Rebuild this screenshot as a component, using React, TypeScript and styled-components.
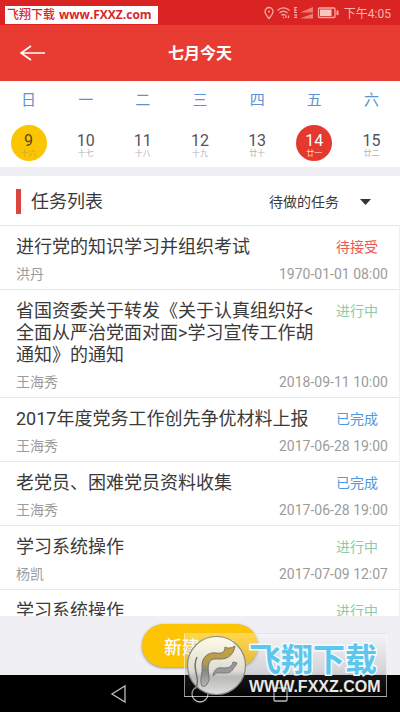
import React, { useState } from "react";
import styled, { createGlobalStyle, css } from "styled-components";

const GlobalStyle = createGlobalStyle`
  * { box-sizing: border-box; }
  body {
    margin: 0;
    background: #efeff4;
    color: #3a3a3a;
    font-family: Roboto, "Noto Sans CJK SC", sans-serif;
  }
  button, select { font: inherit; color: inherit; background: none; border: 0; padding: 0; margin: 0; cursor: pointer; }
  h1, h2, h3, p { margin: 0; font-weight: 400; }
`;

const Page = styled.div`
  position: relative;
  display: flex;
  flex-direction: column;
  height: 100vh;
  overflow: hidden;
`;

const StatusBar = styled.div`
  display: flex;
  align-items: center;
  justify-content: flex-end;
  gap: 5px;
  height: 25px;
  padding: 0 9px;
  flex: none;
  background: #d92423;
  color: #f8b4ae;
  font-size: 12px;
`;

const Header = styled.header`
  display: grid;
  grid-template-columns: 48px 1fr 48px;
  align-items: center;
  height: 56px;
  padding: 0 9px;
  flex: none;
  background: #e83c32;
  color: #fff;
`;

const BackButton = styled.button`
  display: flex;
  align-items: center;
  justify-content: center;
  height: 48px;
`;

const HeaderTitle = styled.h1`
  padding-top: 2px;
  text-align: center;
  font-size: 16px;
  font-weight: 700;
  line-height: 24px;
`;

const Calendar = styled.section`
  display: grid;
  grid-template-columns: repeat(7, 1fr);
  justify-items: center;
  row-gap: 13px;
  padding: 8px 0 6px;
  flex: none;
  background: #fff;
`;

const Weekday = styled.div`
  color: #5c93d2;
  font-size: 15px;
  line-height: 23px;
`;

type Mark = "today" | "selected" | undefined;

const Day = styled.button<{ $mark: Mark }>`
  display: flex;
  flex-direction: column;
  align-items: center;
  justify-content: center;
  width: 36px;
  height: 36px;
  padding-top: 3px;
  border-radius: 50%;
  color: #55515c;
  ${(p) => p.$mark === "today" && css`background: #fbc600; color: #554a20;`}
  ${(p) => p.$mark === "selected" && css`background: #e5382f; color: #fff;`}
`;

const DayNumber = styled.span`
  font-size: 16px;
  line-height: 18px;
`;

const Lunar = styled.span<{ $mark: Mark }>`
  font-size: 8px;
  line-height: 8px;
  color: ${(p) => (p.$mark === "selected" ? "#fbd5d2" : p.$mark === "today" ? "#d0a92a" : "#b4b4b8")};
`;

const ListHeader = styled.div`
  display: flex;
  align-items: center;
  height: 49px;
  margin-top: 9px;
  padding: 2px 29px 0 16px;
  flex: none;
  background: #fff;
`;

const Accent = styled.span`
  width: 5px;
  height: 25px;
  margin-right: 10px;
  background: #dc453f;
`;

const ListTitle = styled.h2`
  flex: 1;
  font-size: 18px;
  line-height: 26px;
`;

const Filter = styled.label`
  display: flex;
  align-items: center;
  gap: 21px;
`;

const FilterSelect = styled.select`
  appearance: none;
  outline: none;
  font-size: 14px;
  line-height: 22px;
`;

const TaskList = styled.ul`
  flex: 1;
  min-height: 0;
  margin: 0;
  padding: 0;
  list-style: none;
  overflow-y: auto;
  scrollbar-width: none;
  background: #fff;
  border-right: 1px solid #f0f0f0;
`;

const TaskRow = styled.li`
  display: grid;
  grid-template-columns: 1fr 52px;
  row-gap: 6px;
  padding: 10px 11px 5px 16px;
  border-top: 1px solid #e6e6e6;
`;

const TaskTitle = styled.h3`
  padding-right: 12px;
  font-size: 18px;
  line-height: 22px;
`;

const stateColors = { 待接受: "#ee5850", 进行中: "#8accaa", 已完成: "#4f98e2" };
type State = keyof typeof stateColors;

const TaskState = styled.span<{ $state: State }>`
  font-size: 14px;
  line-height: 22px;
  color: ${(p) => stateColors[p.$state]};
`;

const TaskMeta = styled.div`
  grid-column: 1 / -1;
  display: flex;
  justify-content: space-between;
  font-size: 14px;
  line-height: 20px;
  color: #9c9c9c;
`;

const Footer = styled.footer`
  display: flex;
  justify-content: center;
  padding: 8px 0;
  flex: none;
  background: #efeff4;
`;

const CreateButton = styled.button`
  height: 43px;
  padding: 0 22px;
  border-radius: 22px;
  background: #fdc403;
  color: #fff;
  font-size: 18px;
  font-weight: 500;
  box-shadow: 0 1px 3px rgba(0, 0, 0, 0.4);
`;

const NavBar = styled.nav`
  display: flex;
  align-items: center;
  justify-content: center;
  gap: 57px;
  height: 37px;
  flex: none;
  background: #000;
`;

const NavButton = styled.button`
  display: flex;
  width: 24px;
  height: 24px;
`;

const SiteTag = styled.div`
  position: absolute;
  top: 6px;
  left: 5px;
  display: flex;
  align-items: center;
  gap: 4px;
  height: 18px;
  padding: 0 6px 0 2px;
  background: #fff;
  color: #d8262a;
  font-family: "Open Sans", "Noto Sans CJK SC", sans-serif;
  font-size: 12px;
  font-weight: 700;
  line-height: 18px;
`;

const SiteTagName = styled.span`
  font-weight: 500;
`;

const Watermark = styled.div`
  position: absolute;
  right: 13px;
  bottom: 15px;
  display: flex;
  align-items: center;
  width: 203px;
  height: 64px;
  border: 1px solid rgba(255, 255, 255, 0.55);
  background: linear-gradient(rgba(255, 255, 255, 0.3), rgba(150, 150, 150, 0.32) 63%, rgba(90, 90, 90, 0.25) 65%, rgba(20, 20, 20, 0.2));
`;

const WatermarkText = styled.div`
  display: flex;
  flex-direction: column;
  padding-top: 10px;
  margin-left: 1px;
  white-space: nowrap;
`;

const WatermarkName = styled.span`
  font-size: 32px;
  font-weight: 700;
  line-height: 34px;
  color: #5ec6ec;
  -webkit-text-stroke: 3px #f2fbff;
  paint-order: stroke fill;
`;

const WatermarkSite = styled.span`
  font-family: "Liberation Sans", sans-serif;
  font-size: 16px;
  font-weight: 700;
  line-height: 20px;
  color: #e8e8e8;
`;

const week = ["日", "一", "二", "三", "四", "五", "六"];

const days: { n: number; lunar: string; mark?: Mark }[] = [
  { n: 9, lunar: "十六", mark: "today" },
  { n: 10, lunar: "十七" },
  { n: 11, lunar: "十八" },
  { n: 12, lunar: "十九" },
  { n: 13, lunar: "廿十" },
  { n: 14, lunar: "廿一", mark: "selected" },
  { n: 15, lunar: "廿二" },
];

const tasks: { title: string; state: State; who: string; when: string }[] = [
  { title: "进行党的知识学习并组织考试", state: "待接受", who: "洪丹", when: "1970-01-01 08:00" },
  { title: "省国资委关于转发《关于认真组织好<全面从严治党面对面>学习宣传工作胡通知》的通知", state: "进行中", who: "王海秀", when: "2018-09-11 10:00" },
  { title: "2017年度党务工作创先争优材料上报", state: "已完成", who: "王海秀", when: "2017-06-28 19:00" },
  { title: "老党员、困难党员资料收集", state: "已完成", who: "王海秀", when: "2017-06-28 19:00" },
  { title: "学习系统操作", state: "进行中", who: "杨凯", when: "2017-07-09 12:07" },
  { title: "学习系统操作", state: "进行中", who: "杨凯", when: "2017-07-09 12:07" },
];

const StatusIcons = () => (
  <svg width="75" height="14" viewBox="0 0 75 14" fill="none" stroke="#f6aaa4" strokeWidth="1.3" aria-hidden="true">
    <path d="M5 12.5C2.5 9.5 1 7.6 1 5.5a4 4 0 0 1 8 0c0 2.100-1.500 4-4 7z" />
    <circle cx="5" cy="5.500" r="1" fill="#f6aaa4" stroke="none" />
    <path d="M13.500 4.500c3.500-3.400 8.500-3.400 12 0M15.500 7c2.400-2.200 5.600-2.200 8 0M17.500 9.300c1.300-1 2.700-1 4 0M19 11.500h1M22 12v-2.500M24.500 12V9.500" />
    <path d="M30 1.500h3M30 4h3M30 6.500h3M30 9h3M30 11.500h3M31 1v5M32 8v4" strokeWidth="1" />
    <path d="M36 6.500 49 1v5.500zM36 12.500 49 7.500v5z" fill="#ee7b75" stroke="none" />
    <rect x="54.500" y="2" width="16.500" height="9.500" rx="1" />
    <rect x="56" y="3.500" width="11.500" height="6.500" fill="#fbc5c0" stroke="none" />
    <path d="M73.500 4.500v4.500" strokeWidth="2" />
  </svg>
);

const Emblem = () => (
  <svg width="63" height="62" viewBox="0 0 63 62" fill="none" aria-hidden="true">
    <defs>
      <linearGradient id="disc" x1="0" y1="0" x2="0" y2="1">
        <stop offset="0" stopColor="#fffbe8" />
        <stop offset="0.600" stopColor="#dedbd2" />
        <stop offset="0.700" stopColor="#b9b9b9" />
        <stop offset="1" stopColor="#dedede" />
      </linearGradient>
      <linearGradient id="wing" x1="0" y1="0" x2="0" y2="1">
        <stop offset="0" stopColor="#c9a536" />
        <stop offset="0.450" stopColor="#b09951" />
        <stop offset="0.600" stopColor="#858585" />
        <stop offset="1" stopColor="#b5b5b5" />
      </linearGradient>
    </defs>
    <circle cx="31.500" cy="31.500" r="29" fill="url(#disc)" stroke="#8b8b86" strokeWidth="1.200" />
    <path d="M17 52c-3-6 1-13 0-20 0-9 6-14 14-13 6 1 9-1 9-6 3 2 7 1 10-1-1 7-6 13-14 13-6 0-10-1-12 4-3 8 3 15-2 21-1 2-3 3-5 2z" fill="url(#wing)" stroke="#77736a" strokeWidth="1" />
    <path d="M28 42c1-7 5-9 10-8 6 0 9-1 10-6l4 1c-1 3-3 4-4 6-2 4-6 4-10 4-4 0-7-1-10 3z" fill="#999" stroke="#777" strokeWidth="1" />
    <path d="M12 23c-4 8-1 15 0 20 1 7-1 11-2 12" stroke="#74716a" strokeWidth="1.500" />
  </svg>
);

export default function App() {
  const [filter, setFilter] = useState("待做的任务");
  return (
    <>
      <GlobalStyle />
      <Page>
        <StatusBar>
          <StatusIcons />
          <span>下午4:05</span>
        </StatusBar>
        <Header>
          <BackButton aria-label="返回">
            <svg width="26" height="16" viewBox="0 0 26 16" fill="none" stroke="#fff" strokeWidth="1.600">
              <path d="M25 8H1M11 1 1 8l10 7" />
            </svg>
          </BackButton>
          <HeaderTitle>七月今天</HeaderTitle>
        </Header>
        <Calendar>
          {week.map((w) => (
            <Weekday key={w}>{w}</Weekday>
          ))}
          {days.map((d) => (
            <Day key={d.n} $mark={d.mark}>
              <DayNumber>{d.n}</DayNumber>
              <Lunar $mark={d.mark}>{d.lunar}</Lunar>
            </Day>
          ))}
        </Calendar>
        <ListHeader>
          <Accent />
          <ListTitle>任务列表</ListTitle>
          <Filter>
            <FilterSelect aria-label="任务筛选" value={filter} onChange={(e) => setFilter(e.target.value)}>
              <option>待做的任务</option>
              <option>已完成任务</option>
            </FilterSelect>
            <svg width="11" height="6" viewBox="0 0 11 6" aria-hidden="true">
              <path d="M0 0h11L5.500 6z" fill="#333" />
            </svg>
          </Filter>
        </ListHeader>
        <TaskList>
          {tasks.map((t, i) => (
            <TaskRow key={i}>
              <TaskTitle>{t.title}</TaskTitle>
              <TaskState $state={t.state}>{t.state}</TaskState>
              <TaskMeta>
                <span>{t.who}</span>
                <time>{t.when}</time>
              </TaskMeta>
            </TaskRow>
          ))}
        </TaskList>
        <Footer>
          <CreateButton>新建任务</CreateButton>
        </Footer>
        <NavBar>
          <NavButton aria-label="后退">
            <svg width="24" height="24" viewBox="0 0 24 24" fill="none" stroke="#bbb" strokeWidth="1.300">
              <path d="M18 4v16L5 12z" />
            </svg>
          </NavButton>
          <NavButton aria-label="主页">
            <svg width="24" height="24" viewBox="0 0 24 24" fill="none" stroke="#bbb" strokeWidth="1.300">
              <circle cx="12" cy="12" r="8" />
            </svg>
          </NavButton>
          <NavButton aria-label="最近任务">
            <svg width="24" height="24" viewBox="0 0 24 24" fill="none" stroke="#bbb" strokeWidth="1.300">
              <rect x="5" y="6" width="13" height="13" rx="1" />
            </svg>
          </NavButton>
        </NavBar>
        <SiteTag>
          <SiteTagName>飞翔下载</SiteTagName>
          <span>www.FXXZ.com</span>
        </SiteTag>
        <Watermark>
          <Emblem />
          <WatermarkText>
            <WatermarkName>飞翔下载</WatermarkName>
            <WatermarkSite>WWW.FXXZ.COM</WatermarkSite>
          </WatermarkText>
        </Watermark>
      </Page>
    </>
  );
}
